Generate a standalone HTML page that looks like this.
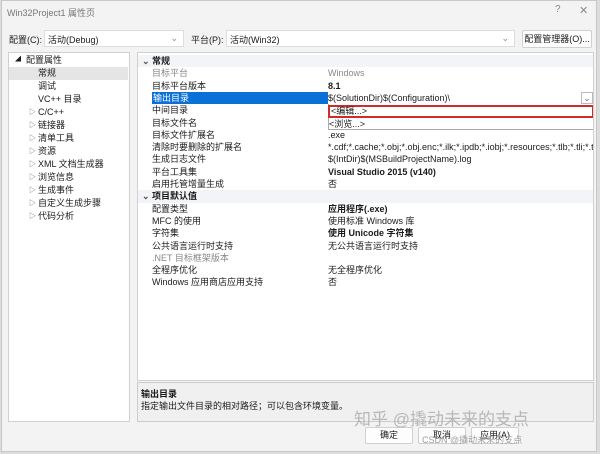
<!DOCTYPE html>
<html><head><meta charset="utf-8"><style>
*{margin:0;padding:0;box-sizing:border-box}
body{width:600px;height:454px;background:#dcdcdc;font-family:"Liberation Sans","Noto Sans CJK SC",sans-serif;font-size:9px;color:#1a1a1a;position:relative;overflow:hidden}
.win{position:absolute;left:1px;top:0;width:596px;height:452px;background:#f3f3f3;border:1px solid #c8c8c8}
.a{position:absolute;white-space:nowrap}
.box{position:absolute;background:#fff;border:1px solid #d0d0d0}
.row{position:absolute;left:0;width:455px;height:12.3px;line-height:12.3px}
.n{position:absolute;left:14px}
.v{position:absolute;left:190px}
.sec{background:#f2f4f8;font-weight:bold}
.g{color:#888}
.b{font-weight:bold}
.t{position:absolute;left:0;width:119px;height:13px;line-height:13px}
.btn{position:absolute;background:#fdfdfd;border:1px solid #d0d0d0;text-align:center;border-radius:2px}
</style></head><body>
<div class="win">
<div class="a" style="left:5px;top:5px;color:#777;font-size:9px">Win32Project1 属性页</div>
<div class="a" style="left:553px;top:3px;color:#888;font-size:10px">?</div>
<div class="a" style="left:577px;top:3px;color:#888;font-size:11px">✕</div>
<div class="a" style="left:7px;top:32px">配置(C):</div>
<div class="box" style="left:42px;top:29px;width:140px;height:17px;border-color:#ddd"><span class="a" style="left:3px;top:2px">活动(Debug)</span><span class="a" style="right:5px;top:2px;color:#888">⌄</span></div>
<div class="a" style="left:189px;top:32px">平台(P):</div>
<div class="box" style="left:224px;top:29px;width:289px;height:17px;border-color:#ddd"><span class="a" style="left:3px;top:2px">活动(Win32)</span><span class="a" style="right:5px;top:2px;color:#888">⌄</span></div>
<div class="btn" style="left:520px;top:29px;width:70px;height:18px;line-height:16px">配置管理器(O)...</div>

<div class="box" style="left:6px;top:51px;width:122px;height:370px">
<div class="t" style="top:1px"><span class="a" style="left:6px;font-size:6px">◢</span><span class="a" style="left:17px">配置属性</span></div>
<div class="t" style="top:14px;background:#e5e5e5"><span class="a" style="left:29px">常规</span></div>
<div class="t" style="top:27px"><span class="a" style="left:29px">调试</span></div>
<div class="t" style="top:40px"><span class="a" style="left:29px">VC++ 目录</span></div>
<div class="t" style="top:53px"><span class="a" style="left:20px;color:#666;font-size:7px">▷</span><span class="a" style="left:29px">C/C++</span></div>
<div class="t" style="top:66px"><span class="a" style="left:20px;color:#666;font-size:7px">▷</span><span class="a" style="left:29px">链接器</span></div>
<div class="t" style="top:79px"><span class="a" style="left:20px;color:#666;font-size:7px">▷</span><span class="a" style="left:29px">清单工具</span></div>
<div class="t" style="top:92px"><span class="a" style="left:20px;color:#666;font-size:7px">▷</span><span class="a" style="left:29px">资源</span></div>
<div class="t" style="top:105px"><span class="a" style="left:20px;color:#666;font-size:7px">▷</span><span class="a" style="left:29px">XML 文档生成器</span></div>
<div class="t" style="top:118px"><span class="a" style="left:20px;color:#666;font-size:7px">▷</span><span class="a" style="left:29px">浏览信息</span></div>
<div class="t" style="top:131px"><span class="a" style="left:20px;color:#666;font-size:7px">▷</span><span class="a" style="left:29px">生成事件</span></div>
<div class="t" style="top:144px"><span class="a" style="left:20px;color:#666;font-size:7px">▷</span><span class="a" style="left:29px">自定义生成步骤</span></div>
<div class="t" style="top:157px"><span class="a" style="left:20px;color:#666;font-size:7px">▷</span><span class="a" style="left:29px">代码分析</span></div>
</div>

<div class="box" style="left:135px;top:51px;width:457px;height:329px;overflow:hidden">
<div class="row sec" style="top:2px"><span class="a" style="left:4px;color:#555">⌄</span><span class="n">常规</span></div>
<div class="row" style="top:14.3px"><span class="n g">目标平台</span><span class="v g">Windows</span></div>
<div class="row" style="top:26.6px"><span class="n">目标平台版本</span><span class="v b">8.1</span></div>
<div class="row" style="top:38.9px"><span class="a" style="left:14px;width:176px;height:12.3px;background:#0a6fd6;color:#fff;padding-left:1px">输出目录</span><span class="v">$(SolutionDir)$(Configuration)\</span><span class="a" style="left:443px;top:0;width:12px;height:12px;border:1px solid #bbb;color:#777;text-align:center;line-height:10px">⌄</span></div>
<div class="row" style="top:51.2px"><span class="n">中间目录</span></div>
<div class="row" style="top:63.5px"><span class="n">目标文件名</span></div>
<div class="row" style="top:75.8px"><span class="n">目标文件扩展名</span><span class="v">.exe</span></div>
<div class="row" style="top:88.1px"><span class="n">清除时要删除的扩展名</span><span class="v">*.cdf;*.cache;*.obj;*.obj.enc;*.ilk;*.ipdb;*.iobj;*.resources;*.tlb;*.tli;*.tlh;*.tmp</span></div>
<div class="row" style="top:100.4px"><span class="n">生成日志文件</span><span class="v">$(IntDir)$(MSBuildProjectName).log</span></div>
<div class="row" style="top:112.7px"><span class="n">平台工具集</span><span class="v b">Visual Studio 2015 (v140)</span></div>
<div class="row" style="top:125px"><span class="n">启用托管增量生成</span><span class="v">否</span></div>
<div class="row sec" style="top:137.3px"><span class="a" style="left:4px;color:#555">⌄</span><span class="n">项目默认值</span></div>
<div class="row" style="top:149.6px"><span class="n">配置类型</span><span class="v b">应用程序(.exe)</span></div>
<div class="row" style="top:161.9px"><span class="n">MFC 的使用</span><span class="v">使用标准 Windows 库</span></div>
<div class="row" style="top:174.2px"><span class="n">字符集</span><span class="v b">使用 Unicode 字符集</span></div>
<div class="row" style="top:186.5px"><span class="n">公共语言运行时支持</span><span class="v">无公共语言运行时支持</span></div>
<div class="row" style="top:198.8px"><span class="n g">.NET 目标框架版本</span></div>
<div class="row" style="top:211.1px"><span class="n">全程序优化</span><span class="v">无全程序优化</span></div>
<div class="row" style="top:223.4px"><span class="n">Windows 应用商店应用支持</span><span class="v">否</span></div>
<div class="a" style="left:190px;top:51px;width:266px;height:26px;background:#fff;border:1px solid #aaa;border-top:none"></div>
<div class="a" style="left:190px;top:52px;width:266px;height:13px;border:2px solid #d42a2a;line-height:9px;padding-left:1px">&lt;编辑...&gt;</div>
<div class="a" style="left:191px;top:65px;line-height:12px">&lt;浏览...&gt;</div>
</div>

<div class="a" style="left:135px;top:381px;width:457px;height:40px;background:#f0f0f0;border:1px solid #ccc">
<div class="a b" style="left:3px;top:4px">输出目录</div>
<div class="a" style="left:3px;top:16px">指定输出文件目录的相对路径；可以包含环境变量。</div>
</div>
<div class="btn" style="left:363px;top:426px;width:48px;height:17px;line-height:15px">确定</div>
<div class="btn" style="left:416px;top:426px;width:48px;height:17px;line-height:15px">取消</div>
<div class="btn" style="left:469px;top:426px;width:48px;height:17px;line-height:15px">应用(A)</div>
<div class="a" style="left:352px;top:404px;font-size:17px;color:rgba(170,170,170,0.8)">知乎 @撬动未来的支点</div>
<div class="a" style="left:420px;top:432px;font-size:9px;color:rgba(150,150,150,0.9)">CSDN @撬动未来的支点</div>
</div>
</body></html>
